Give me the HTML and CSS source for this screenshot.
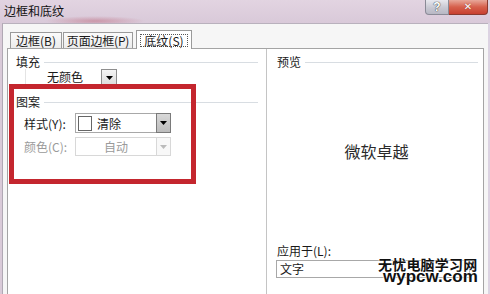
FILE: index.html
```html
<!DOCTYPE html>
<html lang="zh-CN">
<head>
<meta charset="utf-8">
<title>边框和底纹</title>
<link rel="stylesheet" href="styles.css">
</head>
<body>
<div class="window">
  <div class="titlebar">
    <span class="title">边框和底纹</span>
    <div class="caption-btns">
      <span class="btn-help">?</span>
      <span class="btn-close">✕</span>
    </div>
  </div>
  <div class="client">
    <div class="tabs">
      <span class="tab tab-b">边框(<u>B</u>)</span>
      <span class="tab tab-p">页面边框(<u>P</u>)</span>
      <span class="tab active"><span class="focus">底纹(<u>S</u>)</span></span>
    </div>
    <div class="panel">
      <div class="col-left">
        <div class="group-head"><span>填充</span><i class="rule"></i></div>
        <div class="fill-combo">
          <span class="fill-text">无颜色</span>
          <span class="arrow"><svg width="7" height="4" viewBox="0 0 7 4"><path d="M0 0H7L3.5 4Z" fill="#000"/></svg></span>
        </div>
        <div class="group-head pattern-head"><span>图案</span><i class="rule"></i></div>
        <div class="row">
          <span class="label">样式(<u>Y</u>):</span>
          <div class="combo">
            <span class="swatch"></span>
            <span class="combo-text">清除</span>
            <span class="arrow dark"><svg width="7" height="4" viewBox="0 0 7 4"><path d="M0 0H7L3.5 4Z" fill="#000"/></svg></span>
          </div>
        </div>
        <div class="row disabled">
          <span class="label">颜色(<u>C</u>):</span>
          <div class="combo combo-disabled">
            <span class="combo-text center">自动</span>
            <span class="arrow light"><svg width="7" height="4" viewBox="0 0 7 4"><path d="M0 0H7L3.5 4Z" fill="#bbb"/></svg></span>
          </div>
        </div>
      </div>
      <div class="col-right">
        <div class="group-head preview-head"><span>预览</span><i class="rule"></i></div>
        <div class="preview-text">微软卓越</div>
        <div class="apply-label">应用于(<u>L</u>):</div>
        <div class="apply-box">文字</div>
      </div>
      <div class="annot"></div>
    </div>
  </div>
  <div class="watermark">
    <div class="wm-cn">无忧电脑学习网</div>
    <div class="wm-en">wypcw.com</div>
  </div>
</div>
</body>
</html>
```
FILE: styles.css
```css
* { box-sizing: border-box; }
html, body { margin: 0; padding: 0; }
body {
  width: 490px;
  height: 294px;
  overflow: hidden;
  font-family: "Noto Sans CJK SC", "Liberation Sans", sans-serif;
  font-size: 12px;
  color: #1a1a1a;
  background: #fff;
}
u { text-decoration: none; }

.window {
  position: relative;
  width: 490px;
  height: 294px;
  background: linear-gradient(90deg, #d9cad8 0%, #ddd0de 40%, #dcd3e2 100%);
}

.titlebar {
  height: 23px;
  display: flex;
  justify-content: space-between;
  align-items: flex-start;
  background:
    radial-gradient(ellipse 50px 5px at 95px 21px, rgba(190,110,130,0.55), rgba(190,110,130,0) 100%),
    linear-gradient(180deg, #e2d4e1 0%, #d9c9d9 100%);
}
.title {
  margin: 3px 0 0 4px;
  font-size: 12px;
  line-height: 16px;
  color: #111;
}
.caption-btns {
  display: flex;
  margin-right: 2px;
}
.btn-help {
  width: 24px;
  height: 15px;
  border: 1px solid #8a8a96;
  border-top: none;
  border-radius: 0 0 0 4px;
  background: linear-gradient(180deg, #e8e8ee 0%, #c8c8d2 55%, #b8b8c4 100%);
  color: #fff;
  font-family: "Liberation Sans", sans-serif;
  font-weight: bold;
  font-size: 12px;
  line-height: 14px;
  text-align: center;
  text-shadow: 0 0 1px #333, 0 0 1px #333;
}
.btn-close {
  width: 39px;
  height: 15px;
  border: 1px solid #8a3a30;
  border-top: none;
  border-left: none;
  border-radius: 0 0 4px 0;
  background: linear-gradient(180deg, #e8a89a 0%, #d6604c 50%, #c84030 100%);
  color: #fff;
  font-family: "DejaVu Sans", sans-serif;
  font-weight: bold;
  font-size: 10px;
  line-height: 14px;
  text-align: center;
  text-shadow: 0 0 1px #7a2a20;
}

.client {
  height: 271px;
  margin: 0 2px 0 2px;
  border-top: 1px solid #b9b1bd;
  border-left: 1px solid #b0a8b4;
  background: #f6f6f6;
  padding-left: 4px;
}

.tabs {
  height: 24px;
  display: flex;
  align-items: flex-end;
  padding-left: 3px;
  position: relative;
  z-index: 2;
}
.tab {
  height: 16px;
  padding: 0;
  margin-right: 1px;
  border: 1px solid #9a9a9a;
  border-bottom: none;
  background: linear-gradient(180deg, #fbfbfb 0%, #ececec 100%);
  line-height: 15px;
  font-size: 12px;
  color: #1a1a1a;
  white-space: nowrap;
  text-align: center;
}
.tab-b { width: 52px; }
.tab-p { width: 70px; letter-spacing: -0.2px; }
.tab.active {
  height: 19px;
  width: 56px;
  margin-left: 2px;
  margin-bottom: -1px;
  padding: 3px 3px 0;
  background: #fff;
}
.focus {
  display: block;
  border: 1px dotted #555;
  height: 13px;
  line-height: 11px;
  padding: 0 2px;
}

.panel {
  position: relative;
  width: 477px;
  height: 250px;
  border: 1px solid #a4a4a4;
  border-bottom: none;
  background: #fff;
  display: grid;
  grid-template-columns: 258px 1fr;
  align-items: start;
}

.group-head {
  display: flex;
  align-items: center;
  height: 14px;
  line-height: 14px;
}
.group-head .rule {
  flex: 1;
  height: 0;
  border-top: 1px solid #d8dde2;
  margin-left: 4px;
}

.col-left {
  padding-top: 6px;
}
.col-left .group-head {
  padding: 0 8px;
}

.fill-combo {
  position: relative;
  margin: 0 0 0 17px;
  width: 92px;
  height: 17px;
  border-left: 1px solid #e4e4e4;
  border-bottom: 1px solid #e4e4e4;
}
.fill-text {
  position: absolute;
  left: 21px;
  top: 0;
  line-height: 16px;
}
.fill-combo .arrow {
  position: absolute;
  right: 0;
  top: 0;
  width: 16px;
  height: 17px;
}

.arrow {
  display: flex;
  align-items: center;
  justify-content: center;
  border: 1px solid #8e8e8e;
  background: linear-gradient(180deg, #f4f4f4, #dcdcdc);
}
.arrow.dark {
  background: linear-gradient(180deg, #d8d8d8, #bcbcbc);
  border-color: #7a7a7a;
}
.arrow.light {
  background: #f8f8f8;
  border-color: #d8d8d8;
}

.pattern-head {
  margin-top: 9px;
}

.row {
  display: flex;
  align-items: center;
  margin-top: 4px;
  padding-left: 16px;
  height: 20px;
}
.row.disabled {
  margin-top: 4px;
  height: 19px;
  color: #9a9a9a;
}
.label {
  width: 51px;
  white-space: nowrap;
}
.combo {
  display: flex;
  align-items: center;
  width: 96px;
  height: 100%;
  border: 1px solid #a8a8a8;
  background: #fff;
}
.combo-disabled {
  border-color: #d8d8d8;
}
.swatch {
  width: 14px;
  height: 15px;
  border: 1px solid #666;
  margin-left: 2px;
  background: #fff;
}
.combo-text {
  flex: 1;
  margin-left: 5px;
  font-size: 12px;
}
.combo-text.center {
  text-align: center;
  margin-left: 0;
}
.combo .arrow {
  width: 15px;
  height: calc(100% + 2px);
  margin: -1px -1px -1px 0;
}

.col-right {
  border-left: 1px solid #c4c4c4;
  display: flex;
  flex-direction: column;
  padding-top: 6px;
  height: 250px;
}
.preview-head {
  padding: 0 5px 0 10px;
}
.preview-text {
  margin-top: 72px;
  font-size: 16px;
  line-height: 20px;
  color: #2a2a2a;
  text-align: center;
  padding-left: 3px;
}
.apply-label {
  margin-top: 83px;
  padding-left: 10px;
  line-height: 13px;
  font-size: 12px;
}
.apply-box {
  margin: 3px 0 0 9px;
  width: 194px;
  height: 18px;
  border: 1px solid #a8a8a8;
  padding-left: 3px;
  line-height: 16px;
}

.annot {
  position: absolute;
  left: 1px;
  top: 35px;
  width: 187px;
  height: 100px;
  border: 5px solid #c4262e;
  pointer-events: none;
}

.watermark {
  position: absolute;
  left: 378px;
  top: 257px;
  width: 106px;
  text-shadow: 0 0 2px #fff, 0 0 2px #fff, 0 0 2px #fff;
}
.wm-cn {
  font-family: "Noto Sans CJK SC", sans-serif;
  font-weight: bold;
  font-size: 14px;
  line-height: 14px;
  height: 14px;
  letter-spacing: 0.2px;
  color: #111;
}
.wm-en {
  font-family: "Liberation Sans", sans-serif;
  font-weight: bold;
  font-size: 17px;
  line-height: 12px;
  height: 12px;
  padding-left: 5px;
  color: #111;
}
```
